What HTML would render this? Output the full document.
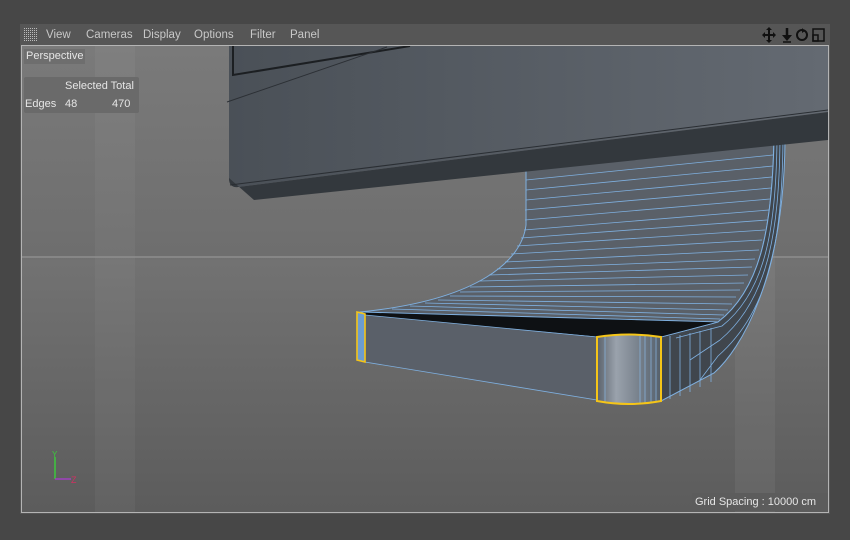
<!DOCTYPE html>
<html><head><meta charset="utf-8"><style>
html,body{margin:0;padding:0;width:850px;height:540px;overflow:hidden;background:#474747;font-family:"Liberation Sans",sans-serif;}
.win{position:absolute;left:20px;top:24px;width:810px;height:490px;background:#565656;}
.menu{position:absolute;left:0;top:0;width:810px;height:21px;color:#c8c8c8;font-size:11.5px;}
.menu span{position:absolute;top:5px;}
.vp{position:absolute;left:1px;top:21px;width:806px;height:466px;border:1px solid #b4b4b4;overflow:hidden;}
.lbl{position:absolute;background:#6e6e6e;color:#e6e6e6;font-size:11px;}
</style></head><body>
<div class="win">
 <div class="menu">
  <svg style="position:absolute;left:4px;top:4px" width="14" height="13"><defs><pattern id="d" width="2" height="2" patternUnits="userSpaceOnUse"><rect width="1" height="1" fill="#bbb"/></pattern></defs><rect width="14" height="13" fill="url(#d)"/></svg>
  <span style="left:26px">View</span><span style="left:66px">Cameras</span><span style="left:123px">Display</span><span style="left:174px">Options</span><span style="left:230px">Filter</span><span style="left:270px">Panel</span>
  <svg style="position:absolute;left:742px;top:3px" width="68" height="16" fill="#111" stroke="#111">
   <path d="M7 2v12M1 8h12" stroke-width="2"/><path d="M7 0l-3 3h6zM7 16l-3-3h6zM0 8l3-3v6zM14 8l-3-3v6z" stroke="none"/>
   <path d="M25 1v10" stroke-width="2.5"/><path d="M20 8h10l-5 6z" stroke="none"/><path d="M21 15h8" stroke-width="1.5"/>
   <circle cx="40" cy="8" r="5" fill="none" stroke-width="2"/><path d="M40 1l3 3-3 2z" stroke="none"/>
   <rect x="51" y="2" width="11" height="12" fill="none" stroke-width="1.5"/><rect x="51" y="8" width="5" height="6" fill="none" stroke-width="1.5"/>
  </svg>
 </div>
 <div class="vp">
 <svg width="806" height="466" viewBox="22 46 806 466" style="position:absolute;left:0;top:0">
  <defs>
   <linearGradient id="bg" x1="0" y1="0" x2="0" y2="1"><stop offset="0" stop-color="#7a7a7a"/><stop offset="0.45" stop-color="#6e6e6e"/><stop offset="0.46" stop-color="#727272"/><stop offset="1" stop-color="#5c5c5c"/></linearGradient>
   <linearGradient id="mon" x1="0" y1="0" x2="1" y2="0"><stop offset="0" stop-color="#4a5057"/><stop offset="1" stop-color="#646a72"/></linearGradient>
   <linearGradient id="cap" x1="0" y1="0" x2="1" y2="0"><stop offset="0" stop-color="#5a626c"/><stop offset="0.3" stop-color="#9aa2ac"/><stop offset="1" stop-color="#55606c"/></linearGradient>
  </defs>
  <rect x="22" y="46" width="806" height="466" fill="url(#bg)"/>
  <rect x="95" y="46" width="40" height="466" fill="#fff" opacity="0.04"/>
  <rect x="735" y="46" width="40" height="466" fill="#fff" opacity="0.05"/>
  <line x1="22" y1="257" x2="828" y2="257" stroke="#8e8e8e" stroke-width="1.5"/>
  <!-- neck back surface -->
  <path d="M526 165 L526 225 C522 260 480 300 360 312 L718 322 C760 290 772 230 774 140 Z" fill="#5a6068" stroke="#7fb0e0" stroke-width="1"/>
  <!-- side strip -->
  <path d="M774 140 C772 230 760 290 718 322 L661 337 L661 401 L714 373 C740 350 784 280 785 140 Z" fill="#40464d" stroke="#7fb0e0" stroke-width="1"/>
  <g stroke="#7fb0e0" stroke-width="0.8" fill="none">
   <path d="M777 140 C776 230 765 292 722 326 L676 338"/>
   <path d="M780 140 C779 232 768 300 720 340 L690 360"/>
   <path d="M783 140 C782 240 770 310 718 356 L700 380"/>
   <path d="M711 328 L711 382"/><path d="M700 331 L700 387"/><path d="M690 333 L690 392"/><path d="M680 335 L680 396"/><path d="M670 336 L670 399"/>
   <line x1="526" y1="180" x2="773" y2="155"/><line x1="526" y1="190" x2="773" y2="166"/><line x1="526" y1="200" x2="772" y2="177"/><line x1="525" y1="210" x2="771" y2="188"/><line x1="525" y1="220" x2="770" y2="199"/><line x1="524" y1="230" x2="769" y2="210"/><line x1="521" y1="238" x2="767" y2="220"/><line x1="517" y1="246" x2="765" y2="230"/><line x1="511" y1="254" x2="762" y2="240"/><line x1="505" y1="262" x2="759" y2="250"/><line x1="497" y1="269" x2="755" y2="259"/><line x1="489" y1="275" x2="752" y2="267"/><line x1="480" y1="281" x2="748" y2="275"/><line x1="470" y1="287" x2="744" y2="283"/><line x1="460" y1="292" x2="740" y2="290"/><line x1="450" y1="296" x2="736" y2="297"/><line x1="438" y1="300" x2="732" y2="304"/><line x1="425" y1="303" x2="728" y2="310"/><line x1="410" y1="306" x2="724" y2="315"/><line x1="392" y1="309" x2="720" y2="319"/>
  </g>
  <!-- monitor -->
  <path d="M229 46 L828 46 L828 112 L238 187 Q229 188 229 178 Z" fill="url(#mon)"/>
  <path d="M229 178 Q229 188 238 187 L828 112 L828 140 L254 200 Z" fill="#33383d"/>
  <path d="M233 46 L233 75 L410 46" fill="none" stroke="#1c1f22" stroke-width="2"/>
  <line x1="227" y1="102" x2="387" y2="47" stroke="#2c3035"/>
  <line x1="230" y1="185" x2="828" y2="110" stroke="#2a2e33"/>
  <!-- base -->
  <path d="M358 312 L718 322 L661 337 L597 337 L365 316 Z" fill="#0e1114" stroke="#7fb0e0" stroke-width="0.8"/>
  <path d="M365 315 L597 337 L597 400 L365 362 Z" fill="#5a6069" stroke="#7fb0e0" stroke-width="0.8"/>
  <path d="M597 337 Q629 332 661 337 L661 401 Q629 407 597 401 Z" fill="url(#cap)"/>
  <g stroke="#8ab8e6" stroke-width="0.7"><line x1="605" y1="337" x2="605" y2="402"/><line x1="640" y1="336" x2="640" y2="404"/><line x1="645" y1="336" x2="645" y2="404"/><line x1="651" y1="336" x2="651" y2="403"/><line x1="656" y1="337" x2="656" y2="402"/></g>
  <path d="M597 337 Q629 332 661 337 L661 401 Q629 407 597 401 Z" fill="none" stroke="#f5c518" stroke-width="2"/>
  <path d="M357 312 L365 314 L365 362 L357 360 Z" fill="#6c9cd0" stroke="#f5c518" stroke-width="1.6"/>
  <!-- axis -->
  <line x1="55" y1="457" x2="55" y2="479" stroke="#3cc83c" stroke-width="1.5"/>
  <line x1="55" y1="479" x2="71" y2="479" stroke="#a040c0" stroke-width="1.5"/>
  <text x="52" y="457" font-size="8" fill="#3cc83c" font-family="Liberation Sans">Y</text>
  <text x="71" y="483" font-size="9" fill="#d03060" font-family="Liberation Sans">Z</text>
 </svg>
 <div class="lbl" style="left:2px;top:3px;padding:0 2px;height:15px;line-height:15px">Perspective</div>
 <div class="lbl" style="left:2px;top:31px;width:115px;height:36px;background:#6a6a6a;border-radius:2px">
  <div style="position:absolute;left:41px;top:3px">Selected Total</div>
  <div style="position:absolute;left:1px;top:21px">Edges</div>
  <div style="position:absolute;left:41px;top:21px">48</div>
  <div style="position:absolute;left:88px;top:21px">470</div>
 </div>
 <div class="lbl" style="left:670px;top:447px;width:134px;height:18px;line-height:18px;background:#5c5c5c;padding-left:3px">Grid Spacing : 10000 cm</div>
 </div>
</div>
</body></html>
